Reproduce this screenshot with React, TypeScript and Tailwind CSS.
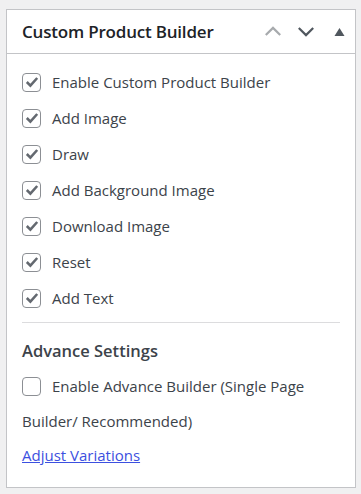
import React from "react";

const Check = () => (
  <svg viewBox="0 0 20 20" className="w-[16px] h-[16px]">
    <path d="M3.5 10 L8 14.5 L16.5 5" fill="none" stroke="#646970" strokeWidth="3.2" strokeLinecap="butt" strokeLinejoin="miter" />
  </svg>
);

const Box = ({ checked }: { checked: boolean }) => (
  <span className="inline-flex shrink-0 w-[19px] h-[19px] items-center justify-center rounded-[4px] border border-[#8c8f94] bg-white align-middle">
    {checked && <Check />}
  </span>
);

const items = [
  "Enable Custom Product Builder",
  "Add Image",
  "Draw",
  "Add Background Image",
  "Download Image",
  "Reset",
  "Add Text",
];

export default function App() {
  return (
    <div className="w-[361px] h-[494px] bg-[#f0f0f1] pt-[9px] pl-[6px]" style={{ fontFamily: '"Open Sans", "Noto Sans", sans-serif' }}>
      <div className="w-[350px] h-[479px] bg-white border border-[#c3c4c7] text-[#1d2327]">
        <div className="h-[44px] border-b border-[#c3c4c7] flex items-center pl-[15px] pr-[10px]">
          <h2 className="text-[17px] font-semibold text-[#1d2327] flex-1 tracking-[-0.2px]">Custom Product Builder</h2>
          <div className="flex items-center gap-[14px]">
            <svg viewBox="0 0 20 12" className="w-[18px] h-[11px]">
              <path d="M2 10 L10 2 L18 10" fill="none" stroke="#a7aaad" strokeWidth="2.4" />
            </svg>
            <svg viewBox="0 0 20 12" className="w-[18px] h-[11px] ml-[1px]">
              <path d="M2 2 L10 10 L18 2" fill="none" stroke="#50575e" strokeWidth="2.4" />
            </svg>
            <svg viewBox="0 0 10 8" className="w-[11px] h-[8px] ml-[5px]">
              <path d="M0 8 L5 0 L10 8 Z" fill="#50575e" />
            </svg>
          </div>
        </div>
        <div className="px-[15px] pt-[18px]">
          <div className="flex flex-col gap-[16px]">
            {items.map((t) => (
              <label key={t} className="flex items-center gap-[11px] h-[20px] text-[15px] text-[#3c434a]">
                <Box checked />
                <span>{t}</span>
              </label>
            ))}
          </div>
          <div className="border-t border-[#dcdcde] mt-[14px]" />
          <h3 className="mt-[16px] text-[16.5px] font-semibold text-[#3c434a]">Advance Settings</h3>
          <div className="mt-[5px] text-[15px] text-[#3c434a] leading-[33px]">
            <Box checked={false} />
            <span className="ml-[11px] align-middle">Enable Advance Builder (Single Page Builder/ Recommended)</span>
          </div>
          <a href="#" className="block text-[15px] text-[#3c50e0] underline leading-[34px]">Adjust Variations</a>
        </div>
      </div>
    </div>
  );
}
